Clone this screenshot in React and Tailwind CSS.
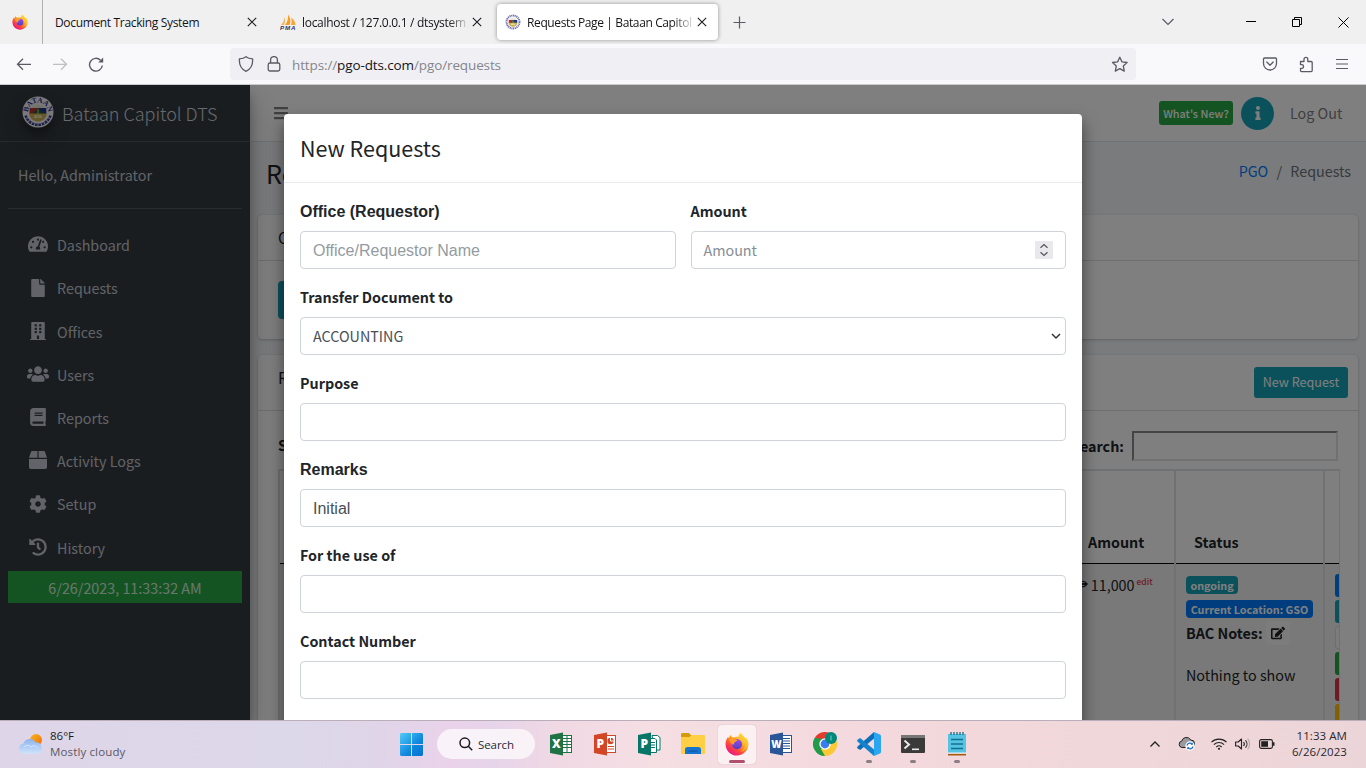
import React from "react";
import {
  FaTachometerAlt, FaFile, FaBuilding, FaUsers, FaBook, FaBox, FaCog, FaHistory, FaInfo, FaEdit, FaBars,
} from "react-icons/fa";

const UI = "font-['Open_Sans','Noto_Sans',sans-serif]";
const SITE = "font-['Noto_Sans_CJK_SC',sans-serif]";

function X({ className = "" }) {
  return (
    <svg className={"shrink-0 " + className} width="10" height="10" viewBox="0 0 10 10" stroke="#1b1b22" strokeWidth="1.1" fill="none">
      <path d="M.8.8l8.4 8.4M9.2.8L.8 9.2" />
    </svg>
  );
}

function Firefox({ size, id }) {
  return (
    <svg width={size} height={size} viewBox="0 0 24 24" className="shrink-0">
      <defs>
        <linearGradient id={id + "a"} x1=".8" y1=".1" x2=".2" y2=".95">
          <stop offset="0" stopColor="#fff04a" />
          <stop offset=".4" stopColor="#ff9a1f" />
          <stop offset=".7" stopColor="#ff4040" />
          <stop offset="1" stopColor="#e31587" />
        </linearGradient>
        <linearGradient id={id + "b"} x1=".5" y1="0" x2=".5" y2="1">
          <stop offset="0" stopColor="#a04be8" />
          <stop offset="1" stopColor="#4a3fc4" />
        </linearGradient>
      </defs>
      <path fill={`url(#${id}a)`} d="M15.6.6c-1.700 1.600-2.200 3.400-2.100 4.500-1.500-.5-3.500-.3-4.800.5C7 5.400 5.900 4.300 5.500 3c-.9.900-1.300 2-1.400 3.200L2.900 5.100C1.300 7.200.5 10 .6 12.400.8 18.800 5.800 23.500 12 23.500c6.400 0 11.400-5 11.400-11.400 0-2.900-1-5.300-2.300-6.900.2 1 .2 1.900 0 2.600C20 4.700 16.800 3.700 15.600.6z" />
      <circle cx="12" cy="12.300" r="5" fill={`url(#${id}b)`} />
      <path fill="#ff9d28" d="M4.300 7.200C6 6 8.200 6.100 9.600 7.200c1.200.1 2.300.5 3 1.300-1 .4-2.200.9-2.700 1.700-.9.400-1.300 1.600-.6 2.400-1.300 0-2.700-.6-3.600-1.900C5 9.700 4.300 8.500 4.300 7.200z" />
      <path fill="#ffc52e" d="M13.500 5.100c3.500 1.600 5.200 5 4.500 8.600 1.200-.8 1.700-2 1.800-3.100 1 4.500-1.500 8.300-5.300 9.200 4-.2 8.300-3.200 8.300-8.300-.2-5-4.500-6-6.700-10-.5.900-2.300 2-2.600 3.600z" opacity=".75" />
    </svg>
  );
}

function Seal({ size, id }) {
  const large = id === "seal-lg";
  return (
    <svg width={size} height={size} viewBox="0 0 32 32" className="shrink-0">
      <defs>
        <path id={id} d="M6.200 18.500A10 10 0 1 1 25.800 18.500" />
      </defs>
      <circle cx="16" cy="16" r="15.500" fill="#f3f3f6" />
      {large ? (
        <>
          <path d="M3.600 19.500a12.900 12.900 0 0 0 24.800 0" fill="none" stroke="#3b3f92" strokeWidth="2.600" strokeDasharray="2.600 .8" />
          <text fontSize="7.500" fontWeight="700" fill="#2f3590" fontFamily="Liberation Serif, serif">
            <textPath href={"#" + id} startOffset="50%" textAnchor="middle">BATAAN</textPath>
          </text>
        </>
      ) : (
        <circle cx="16" cy="16" r="13" fill="none" stroke="#3b3f92" strokeWidth="3.600" strokeDasharray="2.200 1.300" opacity=".75" />
      )}
      <circle cx="16" cy="17" r="8.800" fill="#e9e6d4" />
      <path d="M7.700 12H16v6H7.500z" fill="#c22b2b" />
      <path d="M16 12h8.300v6H16z" fill="#23348c" />
      <path d="M10 17.500l6-5.500 6 5.500z" fill="#1f5c37" />
      <path d="M7.300 17.500h17.400c0 4-4 8-8.700 8s-8.700-4-8.700-8z" fill="#cdb050" />
      <path d="M13 19h6l1.500 3h-9z" fill="#e9dfae" />
      <path d="M16 13v10" stroke="#d8c060" strokeWidth="1" />
    </svg>
  );
}

function Tabs() {
  return (
    <div className="flex h-11 bg-[#f0f0f0] text-[12px] text-[#15141a]">
      <div className="flex w-[43px] items-center border-r border-[#b1b1b3] pl-3">
        <Firefox size={16} id="fxs" />
      </div>
      <div className="flex w-[224px] items-center justify-between pl-3 pr-[10px]">
        <span className="whitespace-nowrap pt-[2px] tracking-[-0.340px]">Document Tracking System</span>
        <X />
      </div>
      <div className="flex w-[225px] items-center pl-[13px]">
        <svg width="16" height="16" viewBox="0 0 16 16" className="mr-[6px] shrink-0">
          <path d="M1 11C3 9 4.300 6 4.500 3c.8 2.500.8 5.500-.5 8z" fill="#f7b45c" />
          <path d="M5 11C7.500 8.500 8.500 4 8 .5c2.500 3 3 7 1.500 10.500z" fill="#f89c1c" />
          <path d="M11 11c.8-2 .8-5 .2-7.500C14 5.500 15.300 8.500 15.600 11z" fill="#f7a437" />
          <text x="0" y="15.500" fontSize="6.200" fontWeight="700" fontStyle="italic" fill="#2f3262" fontFamily="Liberation Sans, sans-serif" textLength="15.500">PMA</text>
        </svg>
        <span className="w-[168px] overflow-hidden whitespace-nowrap pt-[2px] tracking-[-0.300px] [mask-image:linear-gradient(to_right,black_87%,transparent_100%)]">localhost / 127.0.0.1 / dtsystem / d</span>
        <X className="ml-[2px]" />
      </div>
      <div className="ml-[5px] mt-[4px] flex h-9 w-[221px] items-center rounded bg-white pl-2 shadow-[0_0_4px_rgba(0,0,0,0.4)]">
        <Seal size={16} id="seal-sm" />
        <span className="ml-[6px] w-[168px] overflow-hidden whitespace-nowrap pt-[2px] tracking-[-0.380px] [mask-image:linear-gradient(to_right,black_87%,transparent_100%)]">Requests Page | Bataan Capitol DTS</span>
        <X className="ml-[2px]" />
      </div>
      <div className="ml-[15px] flex flex-1 items-center">
        <svg width="13" height="13" viewBox="0 0 13 13" stroke="#5b5b66" strokeWidth="1.200"><path d="M6.500.5v12M.5 6.500h12" /></svg>
      </div>
      <div className="flex w-[217px] items-center">
        <svg className="ml-[13px]" width="12" height="8" viewBox="0 0 12 8" fill="none" stroke="#5b5b66" strokeWidth="1.200"><path d="M.5 1L6 6.500 11.500 1" /></svg>
        <svg className="ml-[72px]" width="10" height="10" viewBox="0 0 10 10" stroke="#000"><path d="M0 4.500h10" /></svg>
        <svg className="ml-[36px]" width="10" height="10" viewBox="0 0 10 10" stroke="#000" fill="none"><path d="M.5 2.500h7v7h-7zM2.500 2.500v-2h7v7h-2" /></svg>
        <svg className="ml-[36px]" width="11" height="11" viewBox="0 0 11 11" stroke="#000" strokeWidth="1"><path d="M.5.500l10 10M10.500.500l-10 10" /></svg>
      </div>
    </div>
  );
}

function Toolbar() {
  return (
    <div className="flex h-[41px] items-start border-b border-[#cccccf] bg-[#f9f9fb] text-[#5b5b66]">
      <div className="flex h-10 w-[230px] items-center">
        <svg className="ml-4" width="16" height="16" viewBox="0 0 16 16" fill="none" stroke="#5b5b66" strokeWidth="1.300"><path d="M15 8.300H1.500M7 2.800L1.500 8.300 7 13.800" /></svg>
        <svg className="ml-5" width="16" height="16" viewBox="0 0 16 16" fill="none" stroke="#bfbfc4" strokeWidth="1.300"><path d="M1 8.300h13.500M9 2.800l5.500 5.500L9 13.800" /></svg>
        <svg className="ml-5" width="16" height="16" viewBox="0 0 16 16" fill="none" stroke="#5b5b66" strokeWidth="1.400"><path d="M14.300 9.500A6.400 6.400 0 1 1 12.500 4.200" /><path d="M15.200 1.500v5h-5z" fill="#5b5b66" stroke="none" /></svg>
      </div>
      <div className="mt-[4px] flex h-8 w-[906px] items-center rounded bg-[#f0f0f4] pl-2 pr-2">
        <svg width="16" height="16" viewBox="0 0 16 16" fill="none" stroke="#5b5b66" strokeWidth="1.300"><path d="M8 .7C6.500 2 4 2.700 1.400 2.800 1 8.500 2.500 13 8 15.300c5.500-2.300 7-6.800 6.600-12.500C12 2.700 9.500 2 8 .7z" strokeLinejoin="round" /></svg>
        <svg className="ml-[12px]" width="16" height="16" viewBox="0 0 16 16" fill="none" stroke="#5b5b66" strokeWidth="1.300"><rect x="2.200" y="7" width="11.600" height="8" rx="1.800" /><path d="M4.600 7V4a3.400 3.400 0 0 1 6.800 0v3" /></svg>
        <span className="ml-[10px] flex-1 whitespace-nowrap pt-[2px] text-[13.500px] tracking-[-0.120px] text-[#85858d]">https://<span className="text-[#15141a]">pgo-dts.com</span>/pgo/requests</span>
        <svg width="17" height="17" viewBox="0 0 17 17" fill="none" stroke="#5b5b66" strokeWidth="1.300" strokeLinejoin="round"><path d="M8.800 1.200l2.200 4.700 5.100.600-3.800 3.500 1 5.100-4.500-2.500L4.300 15.100l1-5.100L1.500 6.500l5.100-.6z" /></svg>
      </div>
      <div className="flex h-10 flex-1 items-center">
        <svg className="ml-[126px]" width="16" height="16" viewBox="0 0 16 16" fill="none" stroke="#5b5b66" strokeWidth="1.300"><path d="M2.500 2h11c.6 0 1 .4 1 1v4.500a6.500 6.500 0 0 1-13 0V3c0-.6.4-1 1-1zM4.800 6L8 9.200 11.200 6" strokeLinejoin="round" strokeLinecap="round" /></svg>
        <svg className="ml-[21px]" width="16" height="17" viewBox="0 0 16 17" fill="none" stroke="#5b5b66" strokeWidth="1.300" strokeLinejoin="round"><path d="M1.500 5.500H5V3.200a1.900 1.900 0 0 1 3.800 0v2.300h3.300c.7 0 1.100.4 1.100 1.100v8c0 .6-.4 1-1 1H2.500c-.6 0-1-.4-1-1v-2.300h1.600a1.900 1.900 0 0 0 0-3.700H1.500z" /></svg>
        <svg className="ml-[20px]" width="14" height="12" viewBox="0 0 14 12" stroke="#5b5b66" strokeWidth="1.200"><path d="M1 1.500h12M1 6h12M1 10.500h12" /></svg>
      </div>
    </div>
  );
}

const NAV = [
  [FaTachometerAlt, "Dashboard", 20],
  [FaFile, "Requests", 18],
  [FaBuilding, "Offices", 18],
  [FaUsers, "Users", 22],
  [FaBook, "Reports", 18],
  [FaBox, "Activity Logs", 18],
  [FaCog, "Setup", 18],
  [FaHistory, "History", 18],
];

function Sidebar() {
  return (
    <aside className="z-10 flex w-[250px] shrink-0 flex-col bg-[#343a40] text-[14.330px] text-[#c2c7d0] shadow-[0_14px_28px_rgba(0,0,0,0.25),0_10px_10px_rgba(0,0,0,0.22)]">
      <div className="flex h-[57px] items-center border-b border-[#4b545c] pl-[22px]">
        <div className="mb-[3px] rounded-full shadow-[0_10px_20px_rgba(0,0,0,0.19),0_6px_6px_rgba(0,0,0,0.23)]"><Seal size={32} id="seal-lg" /></div>
        <span className="ml-[8px] whitespace-nowrap text-[18px] font-light leading-[30px] text-[#d0d4db]">Bataan Capitol DTS</span>
      </div>
      <div className="mx-2 flex h-[67px] items-center border-b border-[#4f5962] pl-[10px]">Hello, Administrator</div>
      <nav className="mt-[14.400px] flex flex-col px-2">
        {NAV.map(([Icon, label, size]) => (
          <div key={label} className="flex h-[43.200px] items-center pl-[17px]">
            <span className="flex w-[26px] justify-center pb-[1px]"><Icon size={size} /></span>
            <span className="ml-[6px]">{label}</span>
          </div>
        ))}
      </nav>
      <div className="mx-2 mt-[2px] flex h-8 items-center justify-center bg-[#28a745] pt-px text-white/80">6/26/2023, 11:33:32 AM</div>
    </aside>
  );
}

function Content() {
  return (
    <div className="flex min-w-0 flex-1 flex-col bg-[#f4f6f9] text-[14.330px] text-[#212529]">
      <header className="flex h-[57px] shrink-0 items-center border-b border-[#dee2e6] bg-white pl-[23px] pr-6 text-[#7f7f7f]">
        <FaBars size={16} className="shrink-0" />
        <span className="ml-auto flex h-6 w-[74px] items-center justify-center rounded-[3px] bg-[#28a745] pt-px text-[10.800px] font-medium text-white">What's New?</span>
        <span className="ml-2 flex h-[33px] w-[33px] items-center justify-center rounded-full bg-[#17a2b8] text-white"><FaInfo size={14} /></span>
        <span className="ml-4 w-[52px] whitespace-nowrap">Log Out</span>
      </header>
      <div className="flex h-[73px] shrink-0 items-start justify-between pl-4 pr-[15px]">
        <h1 className="mt-[12px] text-[25.200px] leading-[38px]">Requests</h1>
        <div className="mt-[17px] flex leading-6">
          <span className="text-[#007bff]">PGO</span>
          <span className="w-[22px] text-center text-[#6c757d]">/</span>
          <span className="text-[#6c757d]">Requests</span>
        </div>
      </div>
      <section className="mx-2 h-[124px] shrink-0 rounded bg-white shadow-[0_0_1px_rgba(0,0,0,0.13),0_1px_3px_rgba(0,0,0,0.2)]">
        <div className="flex h-[46px] items-center border-b border-[#dfdfdf] pl-5 text-[15.800px]">Office Requests</div>
        <div className="ml-5 mt-5 h-[38px] w-[90px] rounded bg-[#17a2b8]" />
      </section>
      <section className="mx-2 mt-4 h-[400px] shrink-0 rounded bg-white shadow-[0_0_1px_rgba(0,0,0,0.13),0_1px_3px_rgba(0,0,0,0.2)]">
        <div className="flex h-[56px] justify-between border-b border-[#dfdfdf] pl-5 pr-[10px] pt-3">
          <span className="-mt-px text-[15.800px] leading-6">Requests</span>
          <span className="flex h-[31px] w-[94px] items-center justify-center rounded-[3px] bg-[#17a2b8] text-[12.550px] text-white">New Request</span>
        </div>
        <div className="flex items-center justify-between pl-5 pr-5 pt-5 font-bold">
          <span className="-mt-[3px]">Show entries</span>
          <span className="flex items-center">
            <span className="mr-2">Search:</span>
            <span className="h-[30px] w-[206px] border-2 border-b-[#e3e3e3] border-l-[#8a8a8a] border-r-[#e3e3e3] border-t-[#8a8a8a]" />
          </span>
        </div>
        <div className="ml-5 mr-[18px] mt-2 flex h-[290px] overflow-hidden border-2 border-[#dee2e6] border-r-[1px]">
          <div className="w-[786px] shrink-0 border-r border-[#dee2e6]">
            <div className="h-[93px] border-b border-[#000]" />
            <div className="h-[200px] bg-[#f2f2f2]" />
          </div>
          <div className="w-[110px] shrink-0 border-r-2 border-[#dee2e6]">
            <div className="flex h-[93px] items-end border-b border-black pb-[11px] pl-[22px] font-bold">Amount</div>
            <div className="flex h-[200px] bg-[#f2f2f2] pl-3 pt-[9px]">
              <span className="whitespace-nowrap leading-6">₱ 11,000</span>
              <span className="ml-[2px] text-[8.500px] font-medium leading-[17px] text-[#dc3545]">edit</span>
            </div>
          </div>
          <div className="w-[149px] shrink-0 border-r-2 border-[#dee2e6]">
            <div className="flex h-[93px] items-end border-b border-black pb-[11px] pl-[18px] font-bold">Status</div>
            <div className="flex h-[200px] flex-col items-start bg-[#f2f2f2] pl-[10px] pt-[12px]">
              <span className="flex h-[18px] w-[52px] items-center justify-center rounded bg-[#17a2b8] pt-[2px] text-[10.750px] font-bold text-white">ongoing</span>
              <span className="mt-[6px] flex h-[18px] w-[127px] items-center justify-center whitespace-nowrap rounded bg-[#007bff] pt-[2px] text-[10.750px] font-bold text-white">Current Location: GSO</span>
              <span className="mt-[3px] flex h-6 items-center font-bold">
                BAC Notes:
                <span className="ml-[3px] flex h-6 w-6 items-center justify-center rounded-[3px] bg-[#f8f9fa]"><FaEdit size={14} /></span>
              </span>
              <span className="mt-[18px] leading-6">Nothing to show</span>
            </div>
          </div>
          <div className="w-[60px] shrink-0">
            <div className="h-[93px] border-b border-black" />
            <div className="flex h-[200px] flex-col gap-[3px] bg-[#f2f2f2] pl-[10px] pt-[10px]">
              <span className="h-[23px] rounded-[3px] bg-[#007bff]" />
              <span className="h-[23px] rounded-[3px] bg-[#17a2b8]" />
              <span className="h-[23px] rounded-[3px] border border-[#ddd] bg-[#f8f9fa]" />
              <span className="h-[23px] rounded-[3px] bg-[#28a745]" />
              <span className="h-[23px] rounded-[3px] bg-[#dc3545]" />
              <span className="h-[23px] rounded-[3px] bg-[#ffc107]" />
            </div>
          </div>
        </div>
      </section>
    </div>
  );
}

const BOX = "flex h-[38px] items-center justify-between rounded border border-[#ced4da] bg-white px-3 text-[#495057]";
const ARIAL = "font-['Liberation_Sans',sans-serif] text-[16px] pt-px";

function Field({ label, arial, children }) {
  return (
    <div className="mb-4 flex flex-1 flex-col">
      <div className={"mb-2 h-6 whitespace-nowrap font-bold leading-6 " + (arial ? ARIAL : "")}>{label}</div>
      <div className={BOX + " " + (arial ? ARIAL : "")}>{children}</div>
    </div>
  );
}

function Modal() {
  return (
    <div className="ml-[284px] mt-[29px] h-[800px] w-[798px] rounded bg-white text-[14.330px] text-[#212529] shadow-[0_8px_16px_rgba(0,0,0,0.5)]">
      <div className="flex h-[69px] items-center border-b border-[#e9ecef] pl-4 text-[21.500px]">New Requests</div>
      <div className="flex flex-col px-4 pt-4">
        <div className="flex gap-[15px]">
          <Field label="Office (Requestor)" arial><span className="text-[#939ba2]">Office/Requestor Name</span></Field>
          <Field label="Amount">
            <span className="text-[#868e96]">Amount</span>
            <span className="flex h-[18px] w-[18px] items-center justify-center bg-[#e9e9ed]">
              <svg width="10" height="14" viewBox="0 0 10 14" fill="none" stroke="#55555c" strokeWidth="1.200"><path d="M1.500 4.800L5 1.500l3.500 3.300M1.500 9.200L5 12.500l3.500-3.300" /></svg>
            </span>
          </Field>
        </div>
        <Field label="Transfer Document to">
          <span>ACCOUNTING</span>
          <svg className="-mr-[8px]" width="10" height="7" viewBox="0 0 10 7" fill="none" stroke="#333" strokeWidth="1.500"><path d="M1 1l4 4 4-4" /></svg>
        </Field>
        <Field label="Purpose" />
        <Field label="Remarks" arial><span>Initial</span></Field>
        <Field label="For the use of" />
        <Field label="Contact Number" />
      </div>
    </div>
  );
}

function Office({ letter, color, children }) {
  return (
    <svg width="24" height="24" viewBox="0 0 24 24">
      <rect x="12" y="3.500" width="10.500" height="17" fill="#fff" stroke={color} strokeWidth="1" />
      {children}
      <path d="M1 3L14 .5v23L1 21z" fill={color} />
      <text x="7.400" y="16.200" fontSize={letter === "W" ? 10 : 12} fontWeight="800" fill="#fff" textAnchor="middle" fontFamily="Open Sans, sans-serif">{letter}</text>
    </svg>
  );
}

function TaskItem({ children, dot, active }) {
  return (
    <div className="relative flex h-12 w-11 items-center justify-center pb-px">
      {active && <span className="absolute left-[3px] top-[4px] h-[39px] w-[38px] rounded bg-white/60 shadow-[0_0_1px_rgba(0,0,0,0.3)]" />}
      <span className="relative">{children}</span>
      {dot && <span className="absolute bottom-[6px] h-[3px] w-[6px] rounded-full bg-[#8c7f84]" />}
      {active && <span className="absolute bottom-[6px] h-[3px] w-4 rounded-full bg-[#b1506c]" />}
    </div>
  );
}

function Taskbar() {
  return (
    <footer className="flex h-12 items-center border-t border-[#b9aeb9] bg-[linear-gradient(90deg,#ded6e8_0%,#dcd7e9_22%,#e0d5e8_28%,#ead3ea_33%,#e6d4ea_36%,#f1d9e4_41%,#f5dfe3_48%,#f4dade_60%,#f2d8db_72%,#ecd5d8_100%)] text-[11.500px]">
      <div className="flex w-[389px] items-center pb-[2px] pl-[18px]">
        <svg width="26" height="24" viewBox="0 0 26 24">
          <defs>
            <linearGradient id="sun" x1="0" y1="0" x2="1" y2="1"><stop offset="0" stopColor="#f9b81c" /><stop offset="1" stopColor="#ee6a10" /></linearGradient>
            <linearGradient id="cld" x1="0" y1="0" x2="0" y2="1"><stop offset="0" stopColor="#8db4ee" /><stop offset="1" stopColor="#cfe3fb" /></linearGradient>
          </defs>
          <circle cx="18" cy="8" r="6" fill="url(#sun)" />
          <path d="M6 21.800a5.200 5.200 0 0 1-.6-10.300 6.800 6.800 0 0 1 12.300-1.200 5.900 5.900 0 0 1 2 11.500z" fill="url(#cld)" />
          <path d="M6 15c1.500-2 5-2.500 7 0 2-2 5-1.500 6 .5" stroke="#e4effd" fill="none" strokeWidth=".8" />
        </svg>
        <div className="ml-[6px] flex flex-col leading-4">
          <span className="text-[#1b1a1f]">86°F</span>
          <span className="tracking-[0.140px] text-[#5b5862]">Mostly cloudy</span>
        </div>
      </div>
      <TaskItem>
        <svg width="23" height="23" viewBox="0 0 23 23">
          <defs><linearGradient id="win" x1="0" y1="0" x2="1" y2="1"><stop offset="0" stopColor="#4fcbf9" /><stop offset=".6" stopColor="#0f86de" /><stop offset="1" stopColor="#0873cf" /></linearGradient></defs>
          <path d="M1 0h10v11H0V1zM12 0h10l1 1v10H12zM0 12h11v11H1l-1-1zM12 12h11v10l-1 1H12z" fill="url(#win)" />
        </svg>
      </TaskItem>
      <div className="mb-px ml-[4px] mr-[4px] flex h-[30px] w-[98px] items-center rounded-full bg-white/70 pl-[22px] text-[#2a2830]">
        <svg width="14" height="14" viewBox="0 0 14 14" fill="none" stroke="#1d1b20" strokeWidth="1.500"><circle cx="5.800" cy="5.800" r="4.800" /><path d="M9.300 9.300L13.200 13.200" /></svg>
        <span className="ml-[5px] pt-px tracking-[-0.080px]">Search</span>
      </div>
      <TaskItem><Office letter="X" color="#1f7244"><path d="M14 6.500h8M14 9.500h8M14 12.500h8M14 15.500h8M18 4v16" stroke="#1f7244" strokeWidth="1" /></Office></TaskItem>
      <TaskItem><Office letter="P" color="#d24625"><circle cx="17.500" cy="9" r="3.200" fill="#d24625" /><path d="M17.500 9V5.500M17.500 9H21" stroke="#fff" /><path d="M15 14.500h6M15 17h6" stroke="#d24625" /></Office></TaskItem>
      <TaskItem>
        <svg width="24" height="24" viewBox="0 0 24 24">
          <path d="M15 3.500h5.500l2.500 2V18h-5z" fill="#fff" stroke="#077568" />
          <path d="M12 6.500h6l1.500 1.500v12.500H12z" fill="#fff" stroke="#077568" />
          <path d="M14 10.500h4M14 13h4M14 15.500h4" stroke="#077568" />
          <path d="M1 3L14 .5v23L1 21z" fill="#077568" />
          <text x="7.400" y="16.200" fontSize="12" fontWeight="800" fill="#fff" textAnchor="middle" fontFamily="Open Sans, sans-serif">P</text>
        </svg>
      </TaskItem>
      <TaskItem>
        <svg width="24" height="24" viewBox="0 0 24 24">
          <path d="M0 2.500C0 1.700.7 1 1.500 1h6.300L10 3v3H0z" fill="#d69a09" />
          <path d="M0 5h8.500l2-2H23c.6 0 1 .4 1 1v17c0 .6-.4 1-1 1H1c-.6 0-1-.4-1-1z" fill="#fccf45" />
          <path d="M4 22v-4.500C4 16 5 15 6.500 15h11c1.500 0 2.500 1 2.500 2.500V22z" fill="#1474cf" />
          <path d="M7.500 18.500h9v1.200h-9z" fill="#0c59a4" />
        </svg>
      </TaskItem>
      <TaskItem active><Firefox size={24} id="fxl" /></TaskItem>
      <TaskItem><Office letter="W" color="#2a5699"><path d="M14 6.500h7M14 9h7M14 11.500h7M14 14h7M14 16.500h7" stroke="#2a5699" strokeWidth="1" /></Office></TaskItem>
      <TaskItem>
        <svg width="24" height="24" viewBox="0 0 24 24">
          <path d="M12 12L1.600 6A12 12 0 0 1 22.400 6z" fill="#e33b2e" />
          <path d="M12 12V24A12 12 0 0 1 1.600 6z" fill="#229a48" />
          <path d="M12 12l10.400-6A12 12 0 0 1 12 24z" fill="#fcc934" />
          <path d="M7.200 14.800L1.600 6l10.400 1z" fill="#229a48" />
          <path d="M16.800 14.800L12 24 8 17z" fill="#fcc934" />
          <path d="M12 6.500h10.700L16 10z" fill="#e33b2e" />
          <circle cx="12" cy="12" r="5.700" fill="#fff" /><circle cx="12" cy="12" r="4.400" fill="#3b7ded" />
          <circle cx="18" cy="6" r="6" fill="#00897b" /><path d="M18 3.500v5" stroke="#7fd0c4" />
        </svg>
      </TaskItem>
      <TaskItem dot>
        <svg width="24" height="24" viewBox="0 0 24 24">
          <path d="M17 0v6.500L3.200 18 .5 16.200c-.5-.5-.5-1.200 0-1.700z" fill="#0d6fb8" />
          <path d="M17 24v-6.500L3.200 6 .5 7.800c-.5.500-.5 1.200 0 1.700z" fill="#1482cc" />
          <path d="M17 0l6 2.500c.6.300 1 .9 1 1.500v16c0 .6-.4 1.200-1 1.500L17 24z" fill="#2ba6f0" />
        </svg>
      </TaskItem>
      <TaskItem dot>
        <svg width="24" height="20" viewBox="0 0 24 20">
          <rect y="1" width="24" height="18" rx="1" fill="#3a3a3a" /><path d="M0 1h24v3H0z" fill="#777" />
          <path d="M3.500 6.500L8 10.500l-4.500 4" fill="none" stroke="#e8e8e8" strokeWidth="2" /><path d="M11 15.300h7" stroke="#e8e8e8" strokeWidth="1.600" />
        </svg>
      </TaskItem>
      <TaskItem dot>
        <svg width="18" height="24" viewBox="0 0 18 24">
          <path d="M0 2h18v19H0z" fill="#54c3e4" /><path d="M0 21.500h18v2H0z" fill="#a85a10" /><path d="M0 20.500h18v1.200H0z" fill="#e9f4f8" />
          <path d="M3 0v3M6 0v3M9 0v3M12 0v3M15 0v3" stroke="#176a80" strokeWidth="1.300" />
          <path d="M3 7.500h12M3 12h12M3 16.500h12" stroke="#13708d" strokeWidth="1.500" />
        </svg>
      </TaskItem>
      <div className="flex flex-1 items-center justify-end pb-[2px] pr-[19px]">
        <svg width="10" height="6" viewBox="0 0 10 6" fill="none" stroke="#222" strokeWidth="1.300"><path d="M.5 5.500L5 1l4.500 4.500" /></svg>
        <svg className="ml-[18px]" width="17" height="15" viewBox="0 0 17 15">
          <path d="M4 11.500a3.300 3.300 0 0 1-.2-6.500A4.800 4.800 0 0 1 12.700 4 3.600 3.600 0 0 1 13 11.500z" fill="#9a9a9e" stroke="#222" strokeWidth="1" />
          <circle cx="12" cy="10" r="4.700" fill="#fff" />
          <path d="M9 9.500a3 3 0 0 1 5.300-1.200M15 10.500a3 3 0 0 1-5.300 1.200" stroke="#1870c8" strokeWidth="1.300" fill="none" />
          <path d="M14.800 6.500v2.300h-2.300zM9.200 13.500v-2.300h2.300z" fill="#1870c8" />
        </svg>
        <svg className="ml-[16px]" width="16" height="12" viewBox="0 0 16 12" fill="none" stroke="#222" strokeWidth="1.100">
          <path d="M.5 4.200a10.600 10.600 0 0 1 15 0M2.900 6.600a7.200 7.200 0 0 1 10.200 0M5.300 9a3.900 3.900 0 0 1 5.400 0" /><circle cx="8" cy="10.800" r="1.100" fill="#222" stroke="none" />
        </svg>
        <svg className="ml-[8px]" width="16" height="12" viewBox="0 0 16 12" fill="none" stroke="#222" strokeWidth="1.100">
          <path d="M.6 4h2.600L6.500 1v10L3.200 8H.6z" strokeLinejoin="round" /><path d="M8.500 4a3 3 0 0 1 0 4M10.500 2.300a5.400 5.400 0 0 1 0 7.400" /><path d="M12.600.7a8 8 0 0 1 0 10.600" stroke="#b5a8aa" />
        </svg>
        <svg className="ml-[8px]" width="16" height="10" viewBox="0 0 16 10"><rect x=".6" y=".6" width="12.800" height="8.800" rx="1.600" fill="none" stroke="#222" strokeWidth="1.100" /><rect x="2.200" y="2.200" width="6.800" height="5.600" fill="#222" /><path d="M14 3.300h1.500v3.400H14z" fill="#222" /></svg>
        <div className="ml-[16px] flex w-[56px] flex-col items-end whitespace-nowrap text-[11.500px] leading-4 tracking-[0.060px] text-[#2a2830]">
          <span>11:33 AM</span>
          <span>6/26/2023</span>
        </div>
      </div>
    </footer>
  );
}

export default function App() {
  return (
    <div className={"flex h-[768px] w-[1366px] flex-col overflow-hidden " + UI}>
      <Tabs />
      <Toolbar />
      <main className={"relative flex h-[635px] overflow-hidden " + SITE}>
        <Sidebar />
        <Content />
        <div className="absolute inset-0 z-20 overflow-hidden bg-black/50">
          <Modal />
        </div>
      </main>
      <Taskbar />
    </div>
  );
}
